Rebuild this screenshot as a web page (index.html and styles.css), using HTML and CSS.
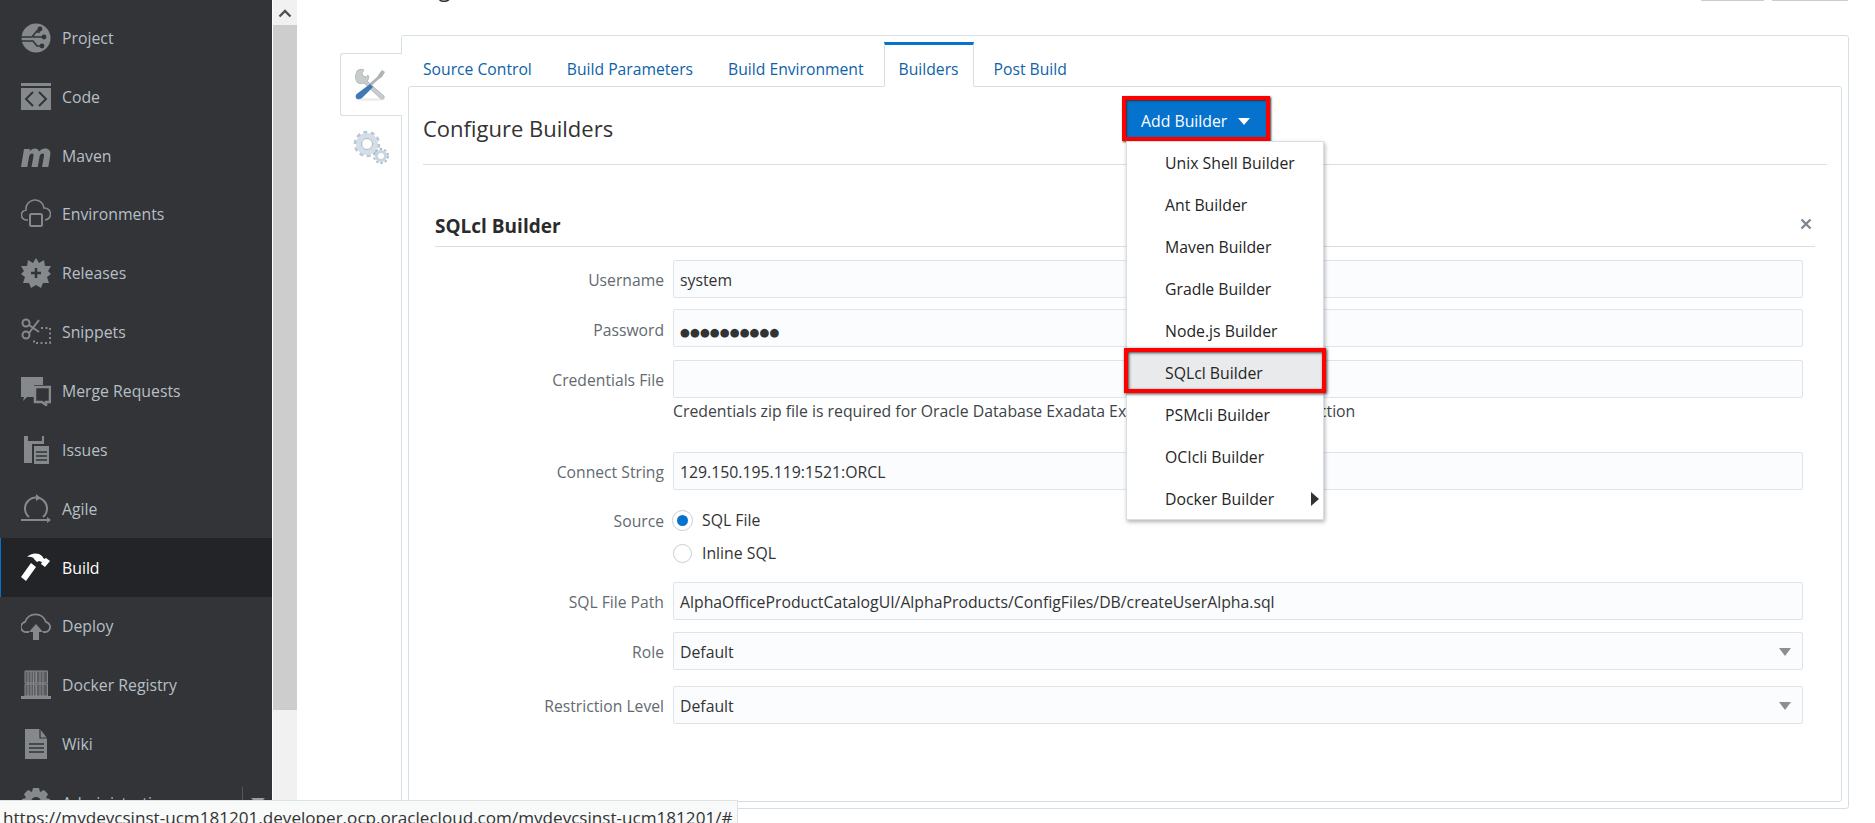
FILE: index.html
```html
<!DOCTYPE html>
<html lang="en">
	<head>
		<meta charset="UTF-8" />
		<title>Build Configure</title>
		<link rel="stylesheet" href="styles.css">
	</head>
	<body>
		<div class="app">
			<nav class="sidebar">
				<div class="nav-list">
					<a class="nav-item"><svg class="nav-icon" viewBox="0 0 30 30"><circle cx="15" cy="15" r="14.5" fill="#86898c"/><path d="M0 14h11l4-5h4M0 18h12l4 5h4M15 9l3-3M12 14h10" stroke="#323437" stroke-width="1.6" fill="none"/><circle cx="19" cy="6" r="2.4" fill="#323437"/><circle cx="23" cy="14" r="2.4" fill="#323437"/><circle cx="21" cy="23" r="2.4" fill="#323437"/></svg>Project</a>
					<a class="nav-item"><svg class="nav-icon" viewBox="0 0 30 30"><path d="M0 1h30v3H0zM0 6h30v22H0z" fill="#86898c"/><path d="M12 10l-7 7 7 7M18 10l7 7-7 7" stroke="#323437" stroke-width="2" fill="none"/></svg>Code</a>
					<a class="nav-item"><svg class="nav-icon" viewBox="0 0 30 30"><path d="M0 26L3 8h6l-.5 2.500C10 8.500 12 7.500 14 7.500c2 0 3.500 1 4 3 1.700-2 3.700-3 6-3 4 0 6 2.500 5.300 6.500L27.300 26H21l2-11c.3-1.800-.4-2.500-1.500-2.500-1.300 0-2.500 1-2.900 3L16.800 26h-6.300l2-11c.3-1.800-.3-2.500-1.500-2.500-1.300 0-2.500 1-2.900 3L6.300 26z" fill="#86898c"/></svg>Maven</a>
					<a class="nav-item"><svg class="nav-icon" viewBox="0 0 30 30"><path d="M7 21H6a5 5 0 0 1-1-10 9 9 0 0 1 18-2 6 6 0 0 1 1 12" stroke="#86898c" stroke-width="1.600" fill="none"/><rect x="9" y="15" width="12" height="12" rx="1.500" stroke="#86898c" stroke-width="2" fill="none"/></svg>Environments</a>
					<a class="nav-item"><svg class="nav-icon" viewBox="0 0 30 30"><path d="M15 0l3 5 5-3 1 6 6 0-3 5 3 3-4 3 2 6-6 0-2 5-5-3-5 3-2-5-6 0 2-6-4-3 3-3-3-5 6 0 1-6 5 3z" fill="#86898c"/><path d="M15 10v10M10 15h10" stroke="#323437" stroke-width="2.500"/></svg>Releases</a>
					<a class="nav-item"><svg class="nav-icon" viewBox="0 0 30 30"><circle cx="5" cy="6" r="3.500" stroke="#86898c" stroke-width="2" fill="none"/><circle cx="5" cy="18" r="3.500" stroke="#86898c" stroke-width="2" fill="none"/><path d="M8 8l10 7M8 16L18 3" stroke="#86898c" stroke-width="2"/><path d="M20 11h9v15H13v-4" stroke="#86898c" stroke-width="2" stroke-dasharray="2 2.500" fill="none"/></svg>Snippets</a>
					<a class="nav-item"><svg class="nav-icon" viewBox="0 0 30 30"><path d="M0 1h22v8h-9v12H6l-4 4 1-4H0z" fill="#86898c"/><path d="M14 11h15v15h-4v3l-4-3h-7z" stroke="#86898c" stroke-width="2.500" fill="none"/></svg>Merge Requests</a>
					<a class="nav-item"><svg class="nav-icon" viewBox="0 0 30 30"><path d="M3 1h4v5h14V1h2v8H11v19H3z" fill="#86898c"/><path d="M13 11h15v18H13z" fill="#86898c"/><path d="M15 17h11M15 21h11M15 25h11" stroke="#323437" stroke-width="1.300"/></svg>Issues</a>
					<a class="nav-item"><svg class="nav-icon" viewBox="0 0 30 30"><path d="M8 24A11 11 0 1 1 22 24" stroke="#86898c" stroke-width="2" fill="none" transform="translate(0 -1)"/><path d="M0 26h27" stroke="#86898c" stroke-width="2"/><path d="M26 23l4 3-4 3zM15 0l5 4-5 3z" fill="#86898c"/></svg>Agile</a>
					<a class="nav-item active"><svg class="nav-icon" viewBox="0 0 30 30"><path d="M10 10l5 4L5 28 0 24z" fill="#fff"/><path d="M6 4C10 0 17-1 21 3l2 3 2-1 4 3-5 6-4-3 1-2-3-1-2 1-3-3C13 5 10 3 6 4z" fill="#fff"/></svg>Build</a>
					<a class="nav-item"><svg class="nav-icon" viewBox="0 0 30 30"><path d="M8 21H6a5 5 0 0 1-2-10 11 11 0 0 1 21 0 5 5 0 0 1-2 10h-1" stroke="#86898c" stroke-width="1.800" fill="none"/><path d="M15 13l7 8h-4v8h-6v-8H8z" fill="#86898c"/></svg>Deploy</a>
					<a class="nav-item"><svg class="nav-icon" viewBox="0 0 30 30"><path d="M4 1h11v12H4zM15.500 1h11v12h-11zM4 14h11v12H4zM15.500 14h11v12h-11z" stroke="#86898c" fill="#5a5c5f"/><path d="M7 1v25M10 1v25M12.500 1v25M19 1v25M22 1v25" stroke="#86898c"/><path d="M0 26h30v3H0z" fill="#86898c"/></svg>Docker Registry</a>
					<a class="nav-item"><svg class="nav-icon" viewBox="0 0 30 30"><path d="M4 0h15l7 9v21H4z" fill="#86898c"/><path d="M19 0v9h7" stroke="#323437" stroke-width="1.200" fill="none"/><path d="M8 15h15M8 19h15M8 23h15" stroke="#323437" stroke-width="1.500"/></svg>Wiki</a>
					<a class="nav-item"><svg class="nav-icon" viewBox="0 0 30 30"><path d="M12 0h6l1 4 4-2 4 4-2 4 4 1v6l-4 1 2 4-4 4-4-2-1 4h-6l-1-4-4 2-4-4 2-4-4-1v-6l4-1-2-4 4-4 4 2z" fill="#86898c"/><circle cx="15" cy="14" r="5" fill="#323437"/></svg>Administration</a>
				</div>
				<div class="nav-more"></div>
			</nav>
			<div class="scrollbar">
				<div class="scroll-up"><svg viewBox="0 0 14 10" width="14" height="10"><path d="M1.500 8.500L7 3l5.500 5.500" stroke="#505050" stroke-width="2.400" fill="none"/></svg></div>
				<div class="scroll-thumb"></div>
			</div>
			<main class="content">
				<div class="page-head">
					<h2 class="page-title">Configure</h2>
					<div class="head-buttons"><button class="head-btn"></button><button class="head-btn wide"></button></div>
				</div>
				<div class="config">
					<div class="side-tabs">
						<div class="side-tab active">
							<svg viewBox="0 0 33 33" width="33" height="33"><path d="M13 17L22 9l2-3 3-4 3 2-3 5-3 2-9 8z" fill="#aeb3b6"/><path d="M2 3c2-2 5-2 7-1L7 5l1 3 3 1 2-2c1 2 1 4-1 6l17 15c1 2-1 4-3 3L9 15c-3 1-5 1-7-1-2-3-2-7 0-11z" fill="#c9cccd" stroke="#9b9fa1" stroke-width=".6"/><path d="M15 16l3 3L8 29c-2 3-6 3-7 1-1-2 0-4 2-5z" fill="#3f78b4"/><ellipse cx="16" cy="31.500" rx="14" ry="1.300" fill="#ddd" opacity=".6"/></svg>
						</div>
						<div class="side-tab">
							<svg viewBox="0 0 38 36" width="38" height="36"><g fill="none"><circle cx="15" cy="14" r="8.500" stroke="#d5dee6" stroke-width="5"/><circle cx="15" cy="14" r="5.500" stroke="#a5b5c2" stroke-width="1"/><circle cx="15" cy="14" r="12" stroke="#b9c8d4" stroke-width="2.500" stroke-dasharray="4 3.500"/><circle cx="29" cy="26" r="4.500" stroke="#c8d4de" stroke-width="3"/><circle cx="29" cy="26" r="7" stroke="#a9bccb" stroke-width="1.800" stroke-dasharray="2.500 2"/></g></svg>
						</div>
					</div>
					<div class="config-panel">
						<ul class="tabs">
							<li class="tab">Source Control</li>
							<li class="tab">Build Parameters</li>
							<li class="tab">Build Environment</li>
							<li class="tab active">Builders</li>
							<li class="tab">Post Build</li>
						</ul>
						<section class="tab-body">
							<h1 class="section-title">Configure Builders</h1>
							<div class="builder-head">
								<h3>SQLcl Builder</h3>
								<svg viewBox="0 0 12 12" width="12" height="12"><path d="M1.500 1.500l9 9M10.500 1.500l-9 9" stroke="#7d8791" stroke-width="2.400"/></svg>
							</div>
							<form class="form">
								<div class="row row-user"><label>Username</label><div class="field">system</div></div>
								<div class="row row-pass"><label>Password</label><div class="field dots">●●●●●●●●●●</div></div>
								<div class="row row-cred"><label>Credentials File</label><div class="field"></div></div>
								<p class="help">Credentials zip file is required for Oracle Database Exadata Express Cloud Service connection</p>
								<div class="row row-conn"><label>Connect String</label><div class="field">129.150.195.119:1521:ORCL</div></div>
								<div class="row row-source">
									<label>Source</label>
									<div class="radios">
										<div class="radio-line"><span class="radio checked"></span>SQL File</div>
										<div class="radio-line"><span class="radio"></span>Inline SQL</div>
									</div>
								</div>
								<div class="row row-path"><label>SQL File Path</label><div class="field">AlphaOfficeProductCatalogUI/AlphaProducts/ConfigFiles/DB/createUserAlpha.sql</div></div>
								<div class="row row-role"><label>Role</label><div class="field select">Default<span class="caret"></span></div></div>
								<div class="row row-level"><label>Restriction Level</label><div class="field select">Default<span class="caret"></span></div></div>
							</form>
						</section>
					</div>
				</div>
			</main>
		</div>

		<!-- Add Builder button and its open menu sit over the form -->
		<button class="add-builder">Add Builder<span class="add-caret"></span></button>
		<ul class="menu">
			<li>Unix Shell Builder</li>
			<li>Ant Builder</li>
			<li>Maven Builder</li>
			<li>Gradle Builder</li>
			<li>Node.js Builder</li>
			<li class="hot">SQLcl Builder</li>
			<li>PSMcli Builder</li>
			<li>OCIcli Builder</li>
			<li class="sub">Docker Builder</li>
		</ul>

		<div class="status-bar">https://mydevcsinst-ucm181201.developer.ocp.oraclecloud.com/mydevcsinst-ucm181201/#</div>
	</body>
</html>
```

FILE: styles.css
```css
* {
	box-sizing: border-box;
}
html,
body {
	margin: 0;
	height: 100%;
	overflow: hidden;
}
body {
	font-family: 'Open Sans', 'Noto Sans', sans-serif;
	font-size: 15.8px;
	color: #333;
	background: #fff;
}
.app {
	display: flex;
	height: 823px;
}

/* Left navigation */
.sidebar {
	position: relative;
	width: 272px;
	flex: none;
	background: #323437;
	overflow: hidden;
}
.nav-list {
	padding-top: 8.5px;
}
.nav-item {
	display: flex;
	align-items: center;
	height: 58.85px;
	padding-left: 21px;
	color: #b6bfc6;
	font-size: 15.8px;
}
.nav-item.active {
	background: #232427;
	border-left: 1px solid #0572ce;
	padding-left: 20px;
	color: #fff;
}
.nav-icon {
	width: 30px;
	height: 30px;
	margin-right: 11px;
	flex: none;
}
.nav-more {
	position: absolute;
	right: 29px;
	top: 787px;
	height: 13px;
	border-left: 1px solid #55575a;
}
.nav-more::after {
	content: '';
	position: absolute;
	left: 8px;
	top: 11px;
	border: 7px solid transparent;
	border-top: 7px solid #9a9c9e;
}
.scrollbar {
	width: 24px;
	flex: none;
	margin-left: 1px;
	background: #f1f1f1;
}
.scroll-up {
	height: 25px;
	display: flex;
	align-items: center;
	justify-content: center;
}
.scroll-thumb {
	height: 685px;
	background: #cdcdcd;
}

/* Main area */
.content {
	flex: 1;
	min-width: 0;
	padding-right: 26px;
}
.page-head {
	display: flex;
	justify-content: space-between;
	height: 35px;
	padding-left: 88px;
	overflow: hidden;
}
.page-title {
	margin: -27px 0 0;
	font-size: 22px;
	font-weight: 400;
	line-height: 30px;
}
.head-buttons {
	display: flex;
	gap: 6px;
	margin-top: -29px;
}
.head-btn {
	width: 65px;
	height: 30px;
	background: #fff;
	border: 1px solid #c4ced7;
	border-radius: 2px;
}
.head-btn.wide {
	width: 78px;
}
.config {
	display: flex;
	padding-left: 43px;
}
.side-tabs {
	width: 61px;
	flex: none;
	padding-top: 18px;
}
.side-tab {
	height: 64px;
	display: flex;
	align-items: center;
	justify-content: center;
	margin-right: -1px;
	position: relative;
}
.side-tab.active {
	height: 63px;
	background: #fff;
	border: 1px solid #d6dfe6;
	border-right: 0;
	border-radius: 3px 0 0 3px;
	z-index: 1;
}
.config-panel {
	flex: 1;
	height: 774px;
	border: 1px solid #d6dfe6;
	border-radius: 3px;
	padding: 6px;
	display: flex;
	flex-direction: column;
}

/* Tabs */
.tabs {
	list-style: none;
	display: flex;
	gap: 5px;
	margin: 0 0 -1px;
	padding: 0;
	height: 45px;
}
.tab {
	color: #0d62ab;
	font-size: 15.7px;
	padding: 16px 15px 0;
	white-space: nowrap;
}
.tab.active {
	background: #fff;
	border: 1px solid #d6dfe6;
	border-top: 3px solid #0572ce;
	border-bottom: 1px solid #fff;
	padding: 13px 14px 0;
	position: relative;
	z-index: 1;
	height: 45px;
}
.tab-body {
	flex: 1;
	border: 1px solid #d6dfe6;
	border-radius: 3px;
	padding: 0 14px;
}
.section-title {
	margin: 0;
	height: 78px;
	padding-top: 20px;
	font-size: 22px;
	line-height: 42px;
	font-weight: 400;
	color: #333;
	border-bottom: 1px solid #d6dfe6;
}
.builder-head {
	display: flex;
	align-items: center;
	justify-content: space-between;
	margin: 43px 12px 0;
	padding: 0 3px 2px 0;
	height: 39px;
	border-bottom: 1px solid #d6dfe6;
}
.builder-head h3 {
	margin: 0;
	font-size: 19px;
	font-weight: 700;
	color: #2b2b2b;
}
.builder-head svg {
	margin-bottom: 4px;
}

/* Form */
.form {
	padding-top: 13px;
}
.row {
	display: flex;
	margin-right: 24px;
}
.row label {
	width: 250px;
	height: 38px;
	flex: none;
	text-align: right;
	color: #636a70;
	font-size: 15.7px;
	line-height: 41px;
	padding-right: 9px;
}
.field {
	flex: 1;
	height: 38px;
	line-height: 39px;
	padding-left: 6px;
	background: #fbfcfe;
	border: 1px solid #dfe4ea;
	border-radius: 2px;
	font-size: 15.8px;
	color: #333;
	position: relative;
}
.row-pass {
	margin-top: 11px;
}
.row-pass label {
	line-height: 42px;
}
.row-cred {
	margin-top: 13px;
}
.dots {
	font-family: 'DejaVu Sans', sans-serif;
	font-size: 11.4px;
	line-height: 44px;
}
.help {
	margin: 0 24px 0 250px;
	height: 54px;
	line-height: 26px;
	font-size: 15.8px;
	color: #3d4348;
}
.row-source {
	margin-top: 11px;
}
.radios {
	padding-top: 10.5px;
}
.radio-line {
	display: flex;
	align-items: center;
	height: 33px;
	font-size: 15.8px;
	color: #333;
	margin-top: -8px;
	margin-bottom: 8px;
}
.radio {
	width: 19px;
	height: 19px;
	border: 1px solid #c7ced4;
	border-radius: 50%;
	background: #fff;
	margin-right: 10px;
}
.radio.checked {
	border: 4px solid #fff;
	outline: 1px solid #c7ced4;
	background: #0572ce;
}
.row-path {
	margin-top: 4.5px;
}
.row-role {
	margin-top: 12px;
}
.row-level {
	margin-top: 16px;
}
.caret {
	position: absolute;
	right: 11px;
	top: 15px;
	border: 6px solid transparent;
	border-top: 8px solid #8a8f94;
	border-bottom: 0;
}

/* Overlay: button + menu */
.add-builder {
	position: absolute;
	left: 1122px;
	top: 96px;
	width: 148px;
	height: 45px;
	padding: 4px 0 0 15px;
	text-align: left;
	background: #0572ce;
	color: #fff;
	font-family: inherit;
	font-size: 15.8px;
	border: 4px solid #f00;
	box-shadow: 1px 1px 2px #333, inset 1px 1px 2px #333;
}
.add-caret {
	display: inline-block;
	margin-left: 11px;
	vertical-align: 2px;
	border: 6px solid transparent;
	border-top: 7px solid #fff;
	border-bottom: 0;
}
.menu {
	position: absolute;
	left: 1126px;
	top: 141px;
	width: 198px;
	height: 379px;
	margin: 0;
	padding: 1px 0 0;
	list-style: none;
	background: #fff;
	border: 1px solid #d6dfe6;
	box-shadow: 1px 2px 4px rgba(0, 0, 0, 0.3);
}
.menu li {
	height: 42px;
	line-height: 41px;
	padding-left: 38px;
	font-size: 15.8px;
	color: #252525;
	position: relative;
}
.menu .hot {
	margin: -5px -3px 2px;
	padding-left: 37px;
	height: 45px;
	line-height: 42px;
	background: #e9eaec;
	border: 4px solid #f00;
	box-shadow: 1px 1px 3px #444, inset 1px 1px 3px #444;
	z-index: 1;
}
.menu .sub::after {
	content: '';
	position: absolute;
	right: 4px;
	top: 13px;
	border: 7px solid transparent;
	border-left: 8px solid #333;
	border-right: 0;
}

.status-bar {
	position: absolute;
	left: 0;
	bottom: 0;
	width: 738px;
	height: 23px;
	padding: 6px 0 0 3px;
	background: #f8f9f9;
	border: 1px solid #e0e2e2;
	border-left: 0;
	border-bottom: 0;
	font-size: 17.1px;
	line-height: 22px;
	white-space: nowrap;
	overflow: hidden;
	color: #333;
}
```
